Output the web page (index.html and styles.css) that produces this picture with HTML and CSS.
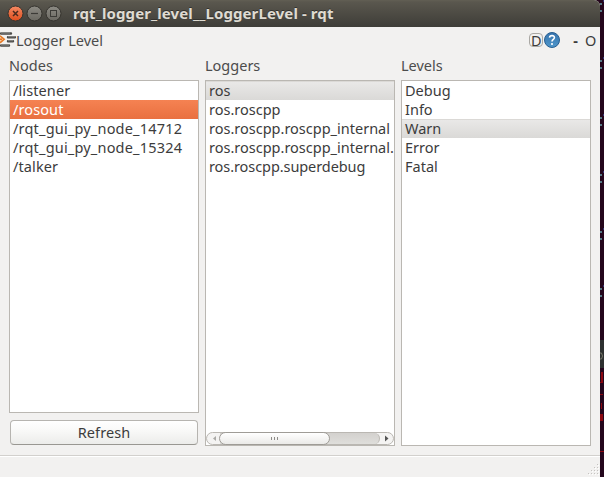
FILE: index.html
```html
<!DOCTYPE html>
<html lang="en">
<head>
<meta charset="utf-8">
<title>rqt_logger_level__LoggerLevel - rqt</title>
<link rel="stylesheet" href="styles.css">
</head>
<body>
<div class="desktop">
  <main class="window">
    <header class="titlebar">
      <svg class="controls" width="56" height="19" viewBox="0 0 56 19">
        <defs>
          <linearGradient id="close" x2="0" y2="1"><stop stop-color="#f58a64"/><stop offset="1" stop-color="#dd4d1c"/></linearGradient>
          <linearGradient id="grey" x2="0" y2="1"><stop stop-color="#8d8b84"/><stop offset="1" stop-color="#6a6861"/></linearGradient>
        </defs>
        <circle cx="9.5" cy="9.5" r="7.5" fill="url(#close)" stroke="#35332e"/>
        <path d="M7 7l5 5M12 7l-5 5" stroke="#4a2a1d" stroke-width="1.5"/>
        <circle cx="28.5" cy="9.5" r="7.5" fill="url(#grey)" stroke="#35332e"/>
        <path d="M25 9.5h7" stroke="#3c3b37" stroke-width="1.2"/>
        <circle cx="47.5" cy="9.5" r="7.5" fill="url(#grey)" stroke="#35332e"/>
        <rect x="44.5" y="6.5" width="6" height="6" fill="none" stroke="#3c3b37"/>
      </svg>
      <h1 class="title">rqt_logger_level__LoggerLevel - rqt</h1>
    </header>
    <div class="dockbar">
      <svg class="logo" width="16" height="18" viewBox="0 0 16 18">
        <g stroke-linecap="round" stroke-width="2.4" stroke="#4b4b49">
          <path d="M1 2.5h10M8 6.2h7M8 10.2h5M1 14.5h8"/>
        </g>
        <path d="M1 2h9M8 5.7h7M8 9.7h5M1 14h8" stroke="#aaa9a5" stroke-width=".7"/>
        <path d="M0 4.8l4.2 3.5L0 11.8" fill="#fbd7b4" stroke="#e77a25" stroke-width="1.6"/>
        <circle cx="1" cy="8.3" r="1" fill="#df6814"/>
      </svg>
      <span class="dock-title">Logger Level</span>
      <span class="d-button">D</span>
      <svg class="help" width="16" height="16" viewBox="0 0 16 16">
        <defs><linearGradient id="help" x2="0" y2="1"><stop stop-color="#3773ad"/><stop offset="1" stop-color="#4f97cb"/></linearGradient></defs>
        <circle cx="8" cy="8" r="7.5" fill="url(#help)" stroke="#285f91"/>
        <path d="M5.5 5.6C5.8 2.9 10.6 3 10.4 5.7 10.3 7.4 8 7.4 8 9.6" fill="none" stroke="#fff" stroke-width="1.6"/>
        <circle cx="8" cy="12" r="1.1" fill="#fff"/>
      </svg>
      <span class="dash">-</span>
      <span class="float">O</span>
    </div>
    <section class="columns">
      <div class="column">
        <h2 class="label">Nodes</h2>
        <ul class="list">
          <li class="row listener">/listener</li>
          <li class="row active listener">/rosout</li>
          <li class="row wide">/rqt_gui_py_node_14712</li>
          <li class="row wide">/rqt_gui_py_node_15324</li>
          <li class="row listener">/talker</li>
        </ul>
        <button class="refresh">Refresh</button>
      </div>
      <div class="column">
        <h2 class="label">Loggers</h2>
        <div class="list scrolled">
          <ul class="rows">
            <li class="row selected">ros</li>
            <li class="row">ros.roscpp</li>
            <li class="row">ros.roscpp.roscpp_internal</li>
            <li class="row">ros.roscpp.roscpp_internal.</li>
            <li class="row tight">ros.roscpp.superdebug</li>
          </ul>
          <div class="scrollbar">
            <svg class="arrow" width="13" height="13"><path d="M9 4v5L6 6.500z" fill="#aaa9a6"/></svg>
            <div class="track"><div class="thumb"><i class="grip"></i><i class="grip"></i><i class="grip"></i></div></div>
            <svg class="arrow" width="13" height="13"><path d="M5 3.500v6l3.500-3z" fill="#555"/></svg>
          </div>
        </div>
      </div>
      <div class="column">
        <h2 class="label">Levels</h2>
        <ul class="list">
          <li class="row">Debug</li>
          <li class="row">Info</li>
          <li class="row selected">Warn</li>
          <li class="row">Error</li>
          <li class="row">Fatal</li>
        </ul>
      </div>
    </section>
    <footer class="statusbar">
      <svg width="11" height="12" viewBox="0 0 11 12">
        <path d="M9 0h1v1H9zM6 3h1v1H6zM9 3h1v1H9zM3 6h1v1H3zM6 6h1v1H6zM9 6h1v1H9zM0 9h1v1H0zM3 9h1v1H3zM6 9h1v1H6zM9 9h1v1H9z" fill="#c5c3c0"/>
        <path d="M10 1h1v1h-1zM7 4h1v1H7zM10 4h1v1h-1zM4 7h1v1H4zM7 7h1v1H7zM10 7h1v1h-1zM1 10h1v1H1zM4 10h1v1H4zM7 10h1v1H7zM10 10h1v1h-1z" fill="#fff"/>
      </svg>
    </footer>
  </main>
  <svg class="terminal" width="4" height="477" viewBox="0 0 4 477">
    <path d="M0 340h4v28H0z" fill="#2d3030"/>
    <path d="M0 3h2v2H0zM0 10h2v2H0zM0 60h2v2H0zM0 67h2v2H0zM0 117h2v2H0zM0 124h2v2H0zM0 174h2v2H0zM0 181h2v2H0zM0 231h2v2H0zM0 238h2v2H0zM0 288h2v2H0zM0 295h2v2H0z" fill="#557985"/>
    <path d="M3 0h1v2H3zM3 57h1v2H3zM3 114h1v2H3zM3 171h1v2H3zM3 228h1v2H3zM3 285h1v2H3z" fill="#34306d"/>
    <path d="M0 353h1.500q2 3 0 6H0" fill="none" stroke="#77776a"/>
    <path d="M1 372h2v11H1zM0 382h3v1H0zM0 394h3v1H0zM1 403h1v6H1zM0 414h3v7H0zM0 451h4v1H0z" fill="#8a0710"/>
  </svg>
</div>
</body>
</html>
```
FILE: styles.css
```css
* { box-sizing: border-box; }
body { margin: 0; font-family: "Noto Sans", sans-serif; font-size: 14.5px; color: #3c3c3c; overflow: hidden; }
h1, h2, ul { margin: 0; padding: 0; font-size: inherit; font-weight: normal; list-style: none; }
.desktop { display: flex; width: 604px; height: 477px; background: #24061c; }
.terminal { flex: none; }
.window { display: flex; flex-direction: column; width: 600px; height: 477px; background: #f2f1f0; border-radius: 0 6px 0 0; overflow: hidden; }
.titlebar { display: flex; align-items: center; flex: none; height: 27px; padding-left: 6px; background: linear-gradient(#625f54, #5a574e 2px, #3e3d38); }
.title { margin: -2px 0 0 11px; font-size: 15px; font-weight: bold; color: #dfdbd2; white-space: nowrap; letter-spacing: .1px; text-shadow: 0 -1px #33322e; }
.dockbar { display: flex; align-items: center; flex: none; height: 27px; }
.logo { margin-top: -2px; }
.dock-title { flex: 1; margin-top: -2px; color: #4c4c4c; }
.d-button { display: flex; justify-content: center; width: 14px; height: 14px; margin: -1px 1px 0 0; border: 1px solid #aaa8a4; border-radius: 4px; line-height: 12px; }
.help { margin-top: -1px; }
.dash { margin: -2px 0 0 13px; font-weight: bold; }
.float { width: 14px; margin: -2px 2px 0 6px; padding-left: 1px; white-space: nowrap; }
.dash, .float { flex: none; }
.columns { display: grid; grid-template-columns: repeat(3, 190px); column-gap: 6px; height: 392px; padding-left: 9px; }
.column { display: flex; flex-direction: column; min-width: 0; }
.label { height: 26px; line-height: 22px; color: #4c4c4c; }
.list { flex: 1; border: 1px solid #bab7b2; background: #fff; overflow: hidden; }
.row { height: 19px; padding-left: 3px; line-height: 18px; white-space: nowrap; }
.wide { letter-spacing: .19px; }
.listener { letter-spacing: .1px; }
.tight { letter-spacing: -.08px; }
.active { color: #fff; background: linear-gradient(#f58252, #e97040); }
.selected { background: linear-gradient(#eae9e8, #dad9d7); box-shadow: inset 0 1px #dbd9d6; }
.refresh { width: 188px; height: 25px; margin: 7px 1px 1px; padding: 0 0 2px; border: 1px solid #b6b4b0; border-bottom-color: #999792; border-radius: 4px; background: linear-gradient(#fff, #f9f9f8 40%, #ececea); font: inherit; color: #3c3c3c; letter-spacing: .1px; }
.scrolled { display: flex; flex-direction: column; }
.rows { flex: 1; }
.scrollbar { display: flex; height: 13px; border: 1px solid #bab7b2; border-radius: 7px; background: #f4f3f2; }
.arrow { flex: none; margin-top: -1px; }
.track { flex: 1; height: 11px; border-right: 1px solid #bab7b2; border-radius: 0 7px 7px 0; background: linear-gradient(#d3d1ce, #dfdedb); }
.thumb { display: flex; align-items: center; justify-content: center; gap: 2px; width: 111px; height: 13px; margin: -1px 0 0 -1px; border: 1px solid #9f9c97; border-radius: 7px; background: linear-gradient(#fff, #ebeae8); }
.grip { width: 1px; height: 3px; background: #8d8b87; }
.statusbar { display: flex; flex: 1; justify-content: flex-end; align-items: flex-end; margin-top: 9px; padding: 0 1px 1px 0; border-top: 1px solid #d2d0cd; box-shadow: inset 0 1px #fff; }
```
